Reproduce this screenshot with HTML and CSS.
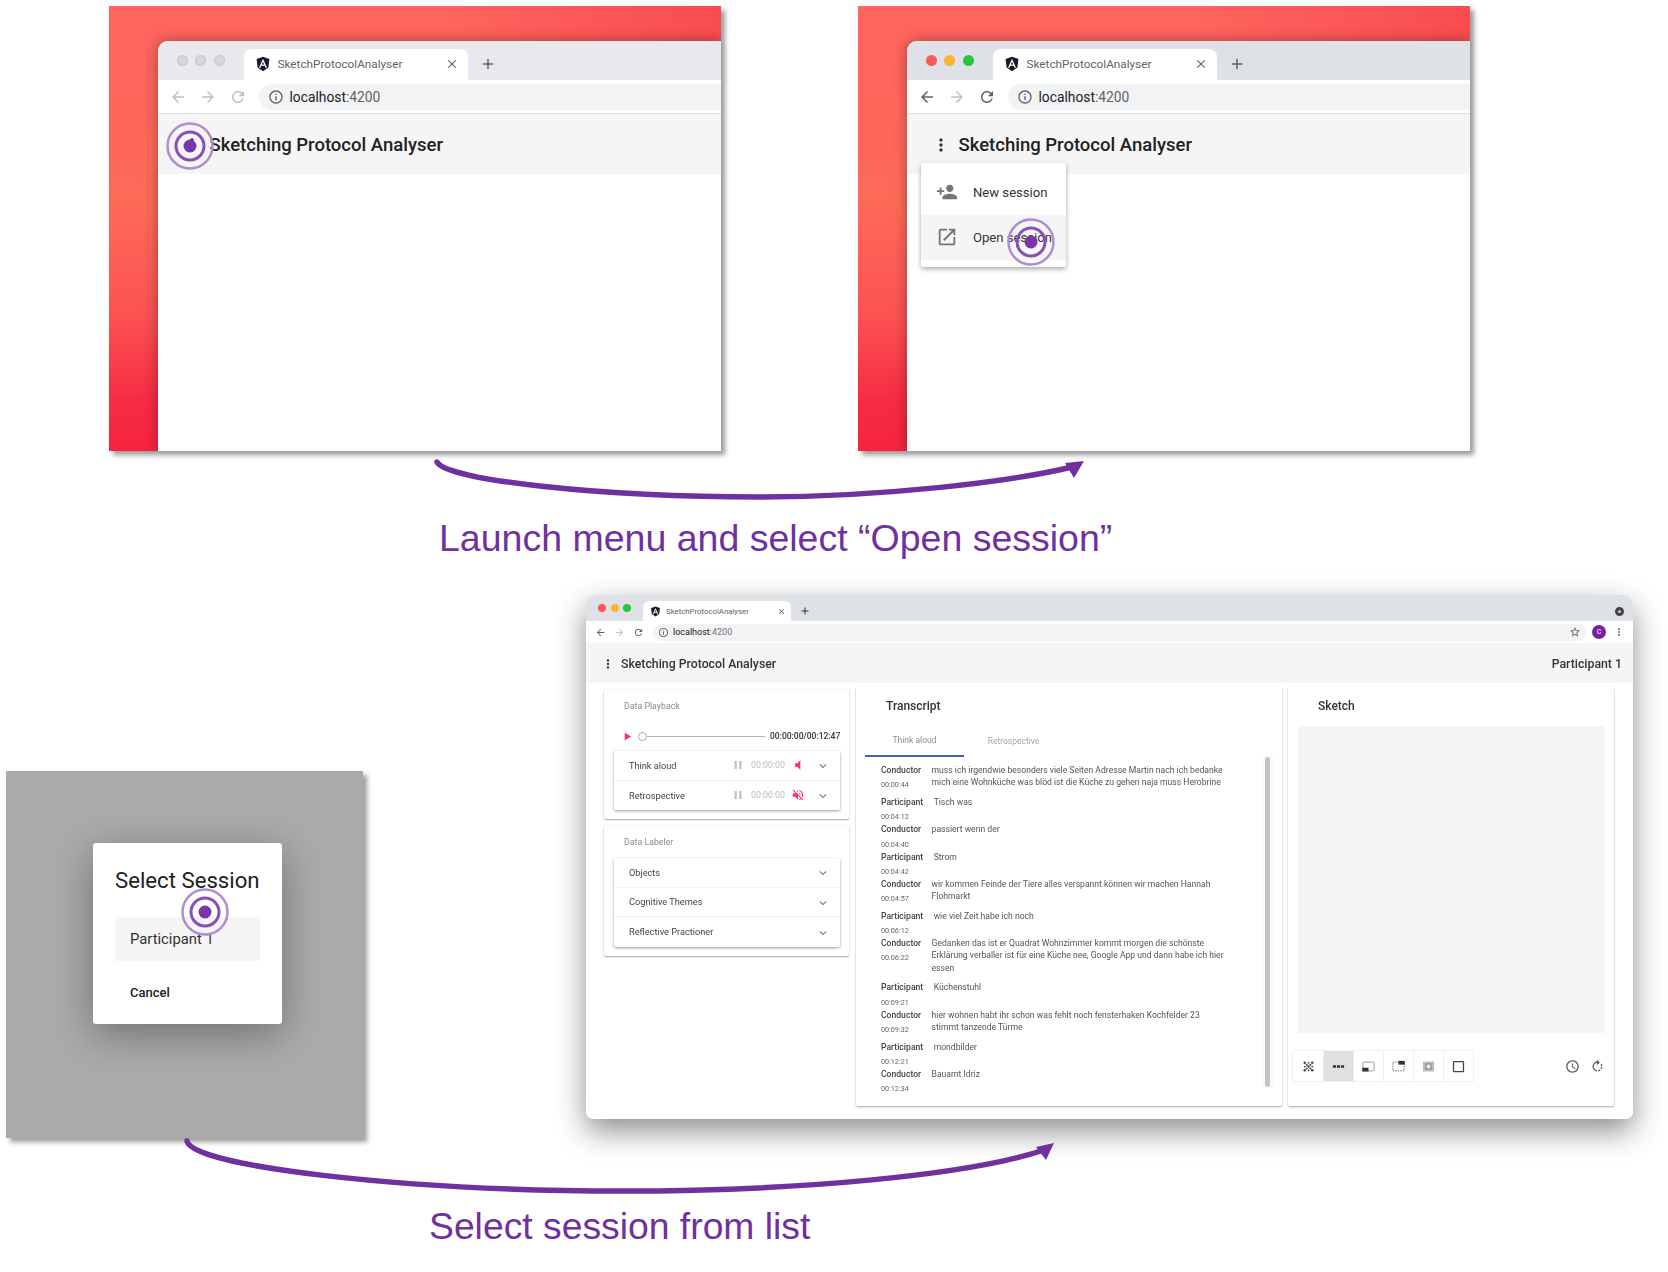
FILE: index.html
```html
<!DOCTYPE html>
<html lang="en">

<head>
    <meta charset="UTF-8">
    <meta name="viewport" content="width=device-width, initial-scale=1.0">
    <title>Sketching Protocol Analyser - open session</title>
    <link rel="stylesheet" href="styles.css">
</head>

<body>
    <!-- icon set -->
    <svg class="defs" width="0" height="0">
        <symbol id="i-back" viewBox="0 0 24 24"><path d="M20 11H7.83l5.59-5.59L12 4l-8 8 8 8 1.41-1.41L7.83 13H20v-2z"/></symbol>
        <symbol id="i-forward" viewBox="0 0 24 24"><path d="M12 4l-1.41 1.41L16.17 11H4v2h12.17l-5.58 5.59L12 20l8-8z"/></symbol>
        <symbol id="i-reload" viewBox="0 0 24 24"><path d="M17.65 6.35C16.2 4.9 14.21 4 12 4c-4.42 0-7.99 3.58-7.99 8s3.57 8 7.99 8c3.73 0 6.84-2.55 7.73-6h-2.08c-.82 2.33-3.04 4-5.65 4-3.31 0-6-2.69-6-6s2.69-6 6-6c1.66 0 3.14.69 4.22 1.78L13 11h7V4l-2.35 2.35z"/></symbol>
        <symbol id="i-info" viewBox="0 0 24 24"><path d="M11 7h2v2h-2zm0 4h2v6h-2zm1-9C6.48 2 2 6.48 2 12s4.48 10 10 10 10-4.48 10-10S17.52 2 12 2zm0 18c-4.41 0-8-3.59-8-8s3.59-8 8-8 8 3.59 8 8-3.59 8-8 8z"/></symbol>
        <symbol id="i-close" viewBox="0 0 24 24"><path d="M19 6.41L17.59 5 12 10.59 6.41 5 5 6.41 10.59 12 5 17.59 6.41 19 12 13.41 17.59 19 19 17.59 13.41 12z"/></symbol>
        <symbol id="i-add" viewBox="0 0 24 24"><path d="M19 13h-6v6h-2v-6H5v-2h6V5h2v6h6v2z"/></symbol>
        <symbol id="i-more" viewBox="0 0 24 24"><path d="M12 8c1.1 0 2-.9 2-2s-.9-2-2-2-2 .9-2 2 .9 2 2 2zm0 2c-1.1 0-2 .9-2 2s.9 2 2 2 2-.9 2-2-.9-2-2-2zm0 6c-1.1 0-2 .9-2 2s.9 2 2 2 2-.9 2-2-.9-2-2-2z"/></symbol>
        <symbol id="i-person-add" viewBox="0 0 24 24"><path d="M15 12c2.21 0 4-1.79 4-4s-1.79-4-4-4-4 1.79-4 4 1.79 4 4 4zm-9-2V7H4v3H1v2h3v3h2v-3h3v-2H6zm9 4c-2.67 0-8 1.34-8 4v2h16v-2c0-2.66-5.33-4-8-4z"/></symbol>
        <symbol id="i-open" viewBox="0 0 24 24"><path d="M19 19H5V5h7V3H5c-1.11 0-2 .9-2 2v14c0 1.1.89 2 2 2h14c1.1 0 2-.9 2-2v-7h-2v7zM14 3v2h3.59l-9.83 9.83 1.41 1.41L19 6.41V10h2V3h-7z"/></symbol>
        <symbol id="i-play" viewBox="0 0 24 24"><path d="M6 4v16l14-8z"/></symbol>
        <symbol id="i-pause" viewBox="0 0 24 24"><path d="M6 19h4V5H6v14zm8-14v14h4V5h-4z"/></symbol>
        <symbol id="i-volume" viewBox="0 0 24 24"><path d="M7 9v6h4l5 5V4l-5 5H7z"/></symbol>
        <symbol id="i-muted" viewBox="0 0 24 24"><path d="M16.5 12c0-1.77-1.02-3.29-2.5-4.03v2.21l2.45 2.45c.03-.2.05-.41.05-.63zm2.5 0c0 .94-.2 1.82-.54 2.64l1.51 1.51C20.63 14.91 21 13.5 21 12c0-4.28-2.99-7.86-7-8.77v2.06c2.89.86 5 3.54 5 6.71zM4.27 3L3 4.27 7.73 9H3v6h4l5 5v-6.73l4.25 4.25c-.67.52-1.42.93-2.25 1.18v2.06c1.38-.31 2.63-.95 3.69-1.81L19.73 21 21 19.73l-9-9L4.27 3zM12 4L9.91 6.09 12 8.18V4z"/></symbol>
        <symbol id="i-chevron" viewBox="0 0 24 24"><path d="M16.59 8.59L12 13.17 7.41 8.59 6 10l6 6 6-6z"/></symbol>
        <symbol id="i-star" viewBox="0 0 24 24"><path d="M22 9.24l-7.19-.62L12 2 9.19 8.63 2 9.24l5.46 4.73L5.82 21 12 17.27 18.18 21l-1.63-7.03L22 9.24zM12 15.4l-3.76 2.27 1-4.28-3.32-2.88 4.38-.38L12 6.1l1.71 4.04 4.38.38-3.32 2.88 1 4.28L12 15.4z"/></symbol>
        <symbol id="i-clock" viewBox="0 0 24 24"><path d="M11.99 2C6.47 2 2 6.48 2 12s4.47 10 9.99 10C17.52 22 22 17.52 22 12S17.52 2 11.99 2zM12 20c-4.42 0-8-3.58-8-8s3.58-8 8-8 8 3.58 8 8-3.58 8-8 8zm.5-13H11v6l5.25 3.15.75-1.23-4.5-2.67z"/></symbol>
        <symbol id="i-rotate" viewBox="0 0 24 24"><path d="M15.55 5.55L11 1v3.07C7.06 4.56 4 7.92 4 12s3.05 7.44 7 7.93v-2.02c-2.84-.48-5-2.94-5-5.91s2.16-5.43 5-5.91V10l4.55-4.45zM19.93 11c-.17-1.39-.72-2.73-1.62-3.89l-1.42 1.42c.54.75.88 1.6 1.02 2.47h2.02zM13 17.9v2.02c1.39-.17 2.74-.71 3.9-1.61l-1.44-1.44c-.75.54-1.59.89-2.46 1.03zm3.89-2.42l1.42 1.41c.9-1.16 1.45-2.5 1.62-3.89h-2.02c-.14.87-.48 1.72-1.02 2.48z"/></symbol>
        <symbol id="i-angular" viewBox="0 0 24 24">
            <path fill="#171c2b" d="M12 1L2.4 4.4l1.5 13L12 23l8.100-5.600 1.500-13z"/>
            <path fill="#fff" fill-rule="evenodd" d="M12 4.200L6 17.800h2.200l1.200-3h5.200l1.200 3H18zM10.300 12.800L12 8.600l1.700 4.200z"/>
        </symbol>
        <symbol id="i-rings" viewBox="0 0 48 48">
            <circle cx="24" cy="24" r="22.500" fill="none" stroke="#b08dd0" stroke-width="2.500"/>
            <circle cx="24" cy="24" r="14" fill="none" stroke="#8b50b6" stroke-width="3"/>
            <circle cx="24" cy="24" r="6.500" fill="#7a35a9"/>
        </symbol>
    </svg>

    <main class="canvas">

        <!-- step 1 -->
        <section class="desktop desktop--one">
            <div class="browser browser--idle">
                <div class="tabstrip">
                    <div class="lights"><i></i><i></i><i></i></div>
                    <div class="tab">
                        <svg class="fav"><use href="#i-angular"/></svg>
                        <span class="tab-title">SketchProtocolAnalyser</span>
                        <svg class="tab-close"><use href="#i-close"/></svg>
                    </div>
                    <svg class="tab-add"><use href="#i-add"/></svg>
                </div>
                <div class="toolbar">
                    <svg class="nav nav--off"><use href="#i-back"/></svg>
                    <svg class="nav nav--off"><use href="#i-forward"/></svg>
                    <svg class="nav nav--off"><use href="#i-reload"/></svg>
                    <div class="omnibox">
                        <svg class="omni-info"><use href="#i-info"/></svg>
                        <span>localhost<em>:4200</em></span>
                    </div>
                </div>
                <header class="appbar">
                    <svg class="appbar-more"><use href="#i-more"/></svg>
                    <span class="appbar-title">Sketching Protocol Analyser</span>
                </header>
            </div>
            <svg class="rings rings--title"><use href="#i-rings"/></svg>
        </section>

        <!-- step 2 -->
        <section class="desktop desktop--two">
            <div class="browser">
                <div class="tabstrip">
                    <div class="lights"><i class="red"></i><i class="amber"></i><i class="green"></i></div>
                    <div class="tab">
                        <svg class="fav"><use href="#i-angular"/></svg>
                        <span class="tab-title">SketchProtocolAnalyser</span>
                        <svg class="tab-close"><use href="#i-close"/></svg>
                    </div>
                    <svg class="tab-add"><use href="#i-add"/></svg>
                </div>
                <div class="toolbar">
                    <svg class="nav"><use href="#i-back"/></svg>
                    <svg class="nav nav--off"><use href="#i-forward"/></svg>
                    <svg class="nav"><use href="#i-reload"/></svg>
                    <div class="omnibox">
                        <svg class="omni-info"><use href="#i-info"/></svg>
                        <span>localhost<em>:4200</em></span>
                    </div>
                </div>
                <header class="appbar">
                    <svg class="appbar-more"><use href="#i-more"/></svg>
                    <span class="appbar-title">Sketching Protocol Analyser</span>
                </header>
            </div>
            <div class="menu">
                <div class="menu-item">
                    <svg><use href="#i-person-add"/></svg>
                    <span>New session</span>
                </div>
                <div class="menu-item menu-item--hover">
                    <svg><use href="#i-open"/></svg>
                    <span>Open session</span>
                </div>
            </div>
            <svg class="rings rings--menu"><use href="#i-rings"/></svg>
        </section>

        <svg class="arrows" viewBox="0 0 1668 1272">
            <path class="arrow-line" d="M437 462C446 480 600 497 760 497C880 497 1010 482 1072 467"/>
            <polygon class="arrow-head" points="1084,461 1065,463 1074,478"/>
            <path class="arrow-line" d="M187 1141C192 1166 400 1191 622 1191C800 1191 970 1175 1044 1150"/>
            <polygon class="arrow-head" points="1054,1143 1036,1147 1046,1160"/>
        </svg>

        <p class="caption caption--one">Launch menu and select “Open session”</p>

        <!-- step 3 -->
        <section class="overlay">
            <div class="dialog">
                <h2>Select Session</h2>
                <div class="dialog-item">Participant 1</div>
                <div class="dialog-cancel">Cancel</div>
            </div>
            <svg class="rings rings--dialog"><use href="#i-rings"/></svg>
        </section>

        <!-- result -->
        <section class="window">
            <div class="window-inner">
                <div class="w-tabstrip">
                    <div class="w-lights"><i class="red"></i><i class="amber"></i><i class="green"></i></div>
                    <div class="w-tab">
                        <svg class="w-fav"><use href="#i-angular"/></svg>
                        <span class="w-tab-title">SketchProtocolAnalyser</span>
                        <svg class="w-close"><use href="#i-close"/></svg>
                    </div>
                    <svg class="w-add"><use href="#i-add"/></svg>
                    <span class="w-record"></span>
                </div>
                <div class="w-toolbar">
                    <svg class="w-nav"><use href="#i-back"/></svg>
                    <svg class="w-nav w-nav--off"><use href="#i-forward"/></svg>
                    <svg class="w-nav"><use href="#i-reload"/></svg>
                    <div class="w-omnibox">
                        <svg class="w-info"><use href="#i-info"/></svg>
                        <span>localhost<em>:4200</em></span>
                        <svg class="w-star"><use href="#i-star"/></svg>
                    </div>
                    <span class="w-avatar">C</span>
                    <svg class="w-kebab"><use href="#i-more"/></svg>
                </div>
                <header class="w-appbar">
                    <svg class="w-more"><use href="#i-more"/></svg>
                    <span class="w-title">Sketching Protocol Analyser</span>
                    <span class="w-user">Participant 1</span>
                </header>

                <div class="w-body">
                    <div class="col-left">
                        <div class="card card--playback">
                            <div class="card-label">Data Playback</div>
                            <div class="player">
                                <svg class="player-play"><use href="#i-play"/></svg>
                                <span class="player-thumb"></span>
                                <span class="player-track"></span>
                                <span class="player-time">00:00:00/00:12:47</span>
                            </div>
                            <div class="panel">
                                <div class="panel-row">
                                    <span class="panel-name">Think aloud</span>
                                    <svg class="ctl-pause"><use href="#i-pause"/></svg>
                                    <span class="ctl-time">00:00:00</span>
                                    <svg class="ctl-vol"><use href="#i-volume"/></svg>
                                    <svg class="ctl-chev"><use href="#i-chevron"/></svg>
                                </div>
                                <div class="panel-row">
                                    <span class="panel-name">Retrospective</span>
                                    <svg class="ctl-pause"><use href="#i-pause"/></svg>
                                    <span class="ctl-time">00:00:00</span>
                                    <svg class="ctl-vol"><use href="#i-muted"/></svg>
                                    <svg class="ctl-chev"><use href="#i-chevron"/></svg>
                                </div>
                            </div>
                        </div>
                        <div class="card card--labeler">
                            <div class="card-label">Data Labeler</div>
                            <div class="panel">
                                <div class="panel-row">
                                    <span class="panel-name">Objects</span>
                                    <svg class="ctl-chev"><use href="#i-chevron"/></svg>
                                </div>
                                <div class="panel-row">
                                    <span class="panel-name">Cognitive Themes</span>
                                    <svg class="ctl-chev"><use href="#i-chevron"/></svg>
                                </div>
                                <div class="panel-row">
                                    <span class="panel-name">Reflective Practioner</span>
                                    <svg class="ctl-chev"><use href="#i-chevron"/></svg>
                                </div>
                            </div>
                        </div>
                    </div>

                    <div class="card transcript">
                        <div class="card-title">Transcript</div>
                        <div class="tabs">
                            <span class="tabs-item tabs-item--on">Think aloud</span>
                            <span class="tabs-item">Retrospective</span>
                        </div>
                        <div class="script">
                            <div class="script-list">
                                <div class="line">
                                    <div class="who"><b>Conductor</b><small>00:00:44</small></div>
                                    <p>muss ich irgendwie besonders viele Seiten Adresse Martin nach ich bedanke<br>mich eine Wohnküche was blöd ist die Küche zu gehen naja muss Herobrine</p>
                                </div>
                                <div class="line">
                                    <div class="who"><b>Participant</b><small>00:04:12</small></div>
                                    <p>Tisch was</p>
                                </div>
                                <div class="line">
                                    <div class="who"><b>Conductor</b><small>00:04:40</small></div>
                                    <p>passiert wenn der</p>
                                </div>
                                <div class="line">
                                    <div class="who"><b>Participant</b><small>00:04:42</small></div>
                                    <p>Strom</p>
                                </div>
                                <div class="line">
                                    <div class="who"><b>Conductor</b><small>00:04:57</small></div>
                                    <p>wir kommen Feinde der Tiere alles verspannt können wir machen Hannah<br>Flohmarkt</p>
                                </div>
                                <div class="line">
                                    <div class="who"><b>Participant</b><small>00:06:12</small></div>
                                    <p>wie viel Zeit habe ich noch</p>
                                </div>
                                <div class="line">
                                    <div class="who"><b>Conductor</b><small>00:06:22</small></div>
                                    <p>Gedanken das ist er Quadrat Wohnzimmer kommt morgen die schönste<br>Erklärung verballer ist für eine Küche nee, Google App und dann habe ich hier<br>essen</p>
                                </div>
                                <div class="line">
                                    <div class="who"><b>Participant</b><small>00:09:21</small></div>
                                    <p>Küchenstuhl</p>
                                </div>
                                <div class="line">
                                    <div class="who"><b>Conductor</b><small>00:09:32</small></div>
                                    <p>hier wohnen habt ihr schon was fehlt noch fensterhaken Kochfelder 23<br>stimmt tanzende Türme</p>
                                </div>
                                <div class="line">
                                    <div class="who"><b>Participant</b><small>00:12:21</small></div>
                                    <p>mondbilder</p>
                                </div>
                                <div class="line">
                                    <div class="who"><b>Conductor</b><small>00:12:34</small></div>
                                    <p>Bauamt Idriz</p>
                                </div>
                            </div>
                            <div class="script-scroll"><span></span></div>
                        </div>
                    </div>

                    <div class="card sketch">
                        <div class="card-title card-title--sketch">Sketch</div>
                        <div class="sketch-canvas"></div>
                        <div class="sketch-tools">
                            <div class="tool-group">
                                <span class="tool">
                                    <svg viewBox="0 0 24 24"><g fill="#444"><circle cx="6" cy="6" r="2"/><circle cx="12" cy="6" r="1.400"/><circle cx="18" cy="6" r="2"/><circle cx="9" cy="9" r="1.600"/><circle cx="15" cy="9" r="1.600"/><circle cx="6" cy="12" r="1.400"/><circle cx="12" cy="12" r="2"/><circle cx="18" cy="12" r="1.400"/><circle cx="9" cy="15" r="1.600"/><circle cx="15" cy="15" r="1.600"/><circle cx="6" cy="18" r="2"/><circle cx="12" cy="18" r="1.400"/><circle cx="18" cy="18" r="2"/></g></svg>
                                </span>
                                <span class="tool tool--on">
                                    <svg viewBox="0 0 24 24"><g fill="#333"><rect x="3" y="10" width="5" height="4"/><rect x="9.500" y="10" width="5" height="4"/><rect x="16" y="10" width="5" height="4"/></g></svg>
                                </span>
                                <span class="tool">
                                    <svg viewBox="0 0 24 24"><rect x="3" y="5" width="18" height="14" rx="1" fill="none" stroke="#999" stroke-width="1.500"/><rect x="2" y="14" width="10" height="6" fill="#333"/></svg>
                                </span>
                                <span class="tool">
                                    <svg viewBox="0 0 24 24"><rect x="3" y="5" width="18" height="14" fill="none" stroke="#555" stroke-width="1.500" stroke-dasharray="2 2"/><rect x="12" y="3" width="10" height="6" fill="#333"/></svg>
                                </span>
                                <span class="tool">
                                    <svg viewBox="0 0 24 24"><rect x="3" y="4" width="18" height="16" fill="#bdbdbd"/><rect x="8" y="8" width="8" height="8" fill="#eee" stroke="#777" stroke-width="1.500"/></svg>
                                </span>
                                <span class="tool">
                                    <svg viewBox="0 0 24 24"><rect x="4" y="4" width="16" height="16" rx="1" fill="none" stroke="#444" stroke-width="2"/></svg>
                                </span>
                            </div>
                            <svg class="sketch-clock"><use href="#i-clock"/></svg>
                            <svg class="sketch-rotate"><use href="#i-rotate"/></svg>
                        </div>
                    </div>
                </div>
            </div>
        </section>

        <p class="caption caption--two">Select session from list</p>
    </main>
</body>

</html>
```
FILE: styles.css
```css
* {
    box-sizing: border-box;
}

body {
    margin: 0;
    background: #fff;
    font-family: Roboto, "Liberation Sans", sans-serif;
    color: #212121;
}

.defs {
    position: absolute;
}

svg {
    display: block;
    fill: currentColor;
}

.canvas {
    position: relative;
    width: 1668px;
    height: 1272px;
    overflow: hidden;
}

/* red desktops with a browser cut off on the right */
.desktop {
    position: absolute;
    top: 6px;
    width: 612px;
    height: 445px;
    padding: 35px 0 0 48.500px;
    overflow: hidden;
    background:
        linear-gradient(90deg, rgba(245, 60, 70, 0) 55%, rgba(245, 60, 70, .6) 100%),
        linear-gradient(180deg, #ff645f 0%, #ff6a58 45%, #fb5252 70%, #f72c44 88%, #f5243f 100%);
    box-shadow: 4px 4px 5px rgba(0, 0, 0, .4);
}

.desktop--one {
    left: 109px;
}

.desktop--two {
    left: 858px;
}

.browser {
    width: 564px;
    height: 410px;
    background: #fff;
    border-radius: 10px 0 0 0;
    box-shadow: 0 0 14px rgba(0, 0, 0, .35);
    overflow: hidden;
}

.tabstrip {
    display: flex;
    height: 39px;
    padding-top: 8px;
    background: #dee1e6;
}

.browser--idle .tabstrip {
    background: #e7e9ec;
}

.lights {
    display: flex;
    gap: 7.5px;
    width: 86px;
    padding: 6px 0 0 19px;
}

.lights i {
    width: 11px;
    height: 11px;
    border-radius: 50%;
    background: #d5d6d7;
    box-shadow: inset 0 0 0 1px #c8c9ca;
}

.lights .red,
.w-lights .red {
    background: #fb5a55;
    box-shadow: none;
}

.lights .amber,
.w-lights .amber {
    background: #fcb32d;
    box-shadow: none;
}

.lights .green,
.w-lights .green {
    background: #2bc541;
    box-shadow: none;
}

.tab {
    display: flex;
    align-items: center;
    width: 224px;
    height: 31px;
    padding: 0 9px 2px 11px;
    background: #fff;
    border-radius: 8px 8px 0 0;
}

.fav {
    width: 16px;
    height: 16px;
}

.tab-title {
    flex: 1;
    margin-left: 7px;
    font-size: 11.750px;
    color: #5f6368;
}

.tab-close {
    width: 14px;
    height: 14px;
    color: #5f6368;
}

.tab-add {
    width: 18px;
    height: 18px;
    margin: 6px 0 0 11px;
    color: #5f6368;
}

.toolbar {
    display: flex;
    align-items: center;
    gap: 12px;
    height: 34px;
    padding-left: 11px;
    background: #fff;
    border-bottom: 1px solid #dadce0;
}

.nav {
    width: 18px;
    height: 18px;
    color: #5f6368;
}

.nav--off {
    color: #bdc1c6;
}

.omnibox {
    display: flex;
    align-items: center;
    flex: 1;
    gap: 6px;
    height: 26px;
    padding-left: 9px;
    background: #f1f3f4;
    border-radius: 13px 0 0 13px;
    font-size: 13.800px;
    color: #202124;
}

.omnibox em {
    font-style: normal;
    color: #5f6368;
}

.omni-info {
    width: 16px;
    height: 16px;
    color: #5f6368;
}

.appbar {
    display: flex;
    align-items: center;
    gap: 8px;
    height: 60px;
    padding: 1px 0 0 24px;
    background: #f5f5f5;
}

.appbar-more {
    width: 20px;
    height: 20px;
    color: #333;
}

.appbar-title {
    font-size: 18.500px;
    font-weight: 500;
}

.rings {
    position: absolute;
    width: 48px;
    height: 48px;
}

.rings--title {
    left: 57px;
    top: 116px;
}

.rings--menu {
    left: 149px;
    top: 212px;
}

.rings--dialog {
    left: 175px;
    top: 117px;
}

.menu {
    position: absolute;
    left: 63px;
    top: 157px;
    width: 145px;
    height: 104px;
    padding-top: 7px;
    background: #fff;
    border-radius: 2px;
    box-shadow: 0 2px 5px rgba(0, 0, 0, .35);
}

.menu-item {
    display: flex;
    align-items: center;
    gap: 15px;
    height: 45px;
    padding: 0 0 1px 15px;
    font-size: 13.100px;
    color: #333;
}

.menu-item svg {
    width: 22px;
    height: 22px;
    color: #757575;
}

.menu-item--hover {
    background: #f5f5f5;
}

/* hand drawn looking arrows */
.arrows {
    position: absolute;
    left: 0;
    top: 0;
    width: 1668px;
    height: 1272px;
    z-index: 3;
    pointer-events: none;
}

.arrow-line {
    fill: none;
    stroke: #7030a0;
    stroke-width: 5.500;
    stroke-linecap: round;
}

.arrow-head {
    fill: #7030a0;
}

.caption {
    position: absolute;
    margin: 0;
    font-family: "Liberation Sans", Arial, sans-serif;
    font-size: 37.500px;
    line-height: 44px;
    color: #7030a0;
    white-space: nowrap;
}

.caption--one {
    left: 439px;
    top: 516px;
}

.caption--two {
    left: 429px;
    top: 1204px;
    font-size: 37.300px;
}

/* grey overlay with the dialog */
.overlay {
    position: absolute;
    left: 6px;
    top: 771px;
    width: 357px;
    height: 367px;
    padding: 72px 0 0 87px;
    background: #ababab;
    box-shadow: 4px 4px 5px rgba(0, 0, 0, .4);
}

.dialog {
    width: 189px;
    height: 181px;
    padding: 22px 22px 0;
    background: #fff;
    border-radius: 3px;
    box-shadow: 0 10px 40px rgba(0, 0, 0, .35);
}

.dialog h2 {
    margin: 0;
    font-size: 22.200px;
    line-height: 30px;
    font-weight: 400;
    white-space: nowrap;
}

.dialog-item {
    display: flex;
    align-items: center;
    width: 145px;
    height: 44px;
    margin-top: 22px;
    padding-left: 15px;
    background: #f5f5f5;
    font-size: 14.800px;
    color: #333;
}

.dialog-cancel {
    margin: 24px 0 0 15px;
    font-size: 13px;
    line-height: 16px;
    font-weight: 500;
}

/* big result window */
.window {
    position: absolute;
    left: 586px;
    top: 595px;
    width: 1047px;
    height: 524px;
    background: #fff;
    border-radius: 10px 10px 7px 7px;
    box-shadow: 0 12px 30px rgba(0, 0, 0, .45);
    overflow: hidden;
}

.window-inner {
    filter: blur(.55px);
}

.w-tabstrip {
    display: flex;
    align-items: flex-end;
    height: 26px;
    padding-left: 12px;
    background: #dee1e6;
}

.w-lights {
    display: flex;
    align-self: flex-start;
    gap: 4.500px;
    width: 45px;
    padding-top: 9px;
}

.w-lights i {
    width: 8px;
    height: 8px;
    border-radius: 50%;
}

.w-tab {
    display: flex;
    align-items: center;
    width: 148px;
    height: 20px;
    padding: 0 5px 0 7px;
    background: #fff;
    border-radius: 6px 6px 0 0;
}

.w-fav {
    width: 11px;
    height: 11px;
}

.w-tab-title {
    flex: 1;
    margin-left: 5px;
    font-size: 7.800px;
    color: #5f6368;
}

.w-close {
    width: 9px;
    height: 9px;
    color: #5f6368;
}

.w-add {
    width: 12px;
    height: 12px;
    margin: 0 0 4px 8px;
    color: #333;
}

.w-record {
    align-self: flex-start;
    width: 9px;
    height: 9px;
    margin: 12px 9px 0 auto;
    border: 3px solid #444;
    border-radius: 50%;
    background: #ccc;
}

.w-toolbar {
    display: flex;
    align-items: center;
    gap: 8px;
    height: 22px;
    padding-left: 9px;
    background: #fff;
}

.w-nav {
    width: 11px;
    height: 11px;
    color: #5f6368;
}

.w-nav--off {
    color: #bdc1c6;
}

.w-omnibox {
    display: flex;
    align-items: center;
    gap: 4px;
    width: 933px;
    height: 17px;
    margin-left: 1px;
    padding: 0 5px;
    background: #f1f3f4;
    border-radius: 9px;
    font-size: 9px;
    color: #202124;
}

.w-omnibox em {
    font-style: normal;
    color: #777;
}

.w-info {
    width: 11px;
    height: 11px;
    color: #5f6368;
}

.w-star {
    width: 12px;
    height: 12px;
    margin-left: auto;
    color: #5f6368;
}

.w-avatar {
    display: flex;
    align-items: center;
    justify-content: center;
    width: 14px;
    height: 14px;
    margin-left: -2px;
    border-radius: 50%;
    background: #7b1fa2;
    color: #fff;
    font-size: 7px;
}

.w-kebab {
    width: 12px;
    height: 12px;
    margin-left: -1px;
    color: #777;
}

.w-appbar {
    display: flex;
    align-items: center;
    height: 40px;
    padding: 1px 11px 0 15px;
    background: #f5f5f5;
    font-size: 12.300px;
    font-weight: 500;
    color: #333;
}

.w-more {
    width: 14px;
    height: 14px;
    margin-right: 6px;
    color: #333;
}

.w-user {
    margin-left: auto;
}

.w-body {
    display: flex;
    gap: 7px;
    height: 436px;
    padding: 4px 18px 13px 18px;
    align-items: flex-start;
}

.col-left {
    display: flex;
    flex-direction: column;
    gap: 6px;
    width: 245px;
    padding-top: 2px;
}

.card {
    background: #fff;
    border-radius: 2px;
    box-shadow: 0 1px 2px rgba(0, 0, 0, .35), 0 0 2px rgba(0, 0, 0, .06);
}

.card--playback {
    height: 130px;
    padding-top: 11px;
}

.card--labeler {
    height: 131px;
    padding-top: 11px;
}

.card-label {
    padding-left: 20px;
    font-size: 8.800px;
    line-height: 12px;
    color: #8a8a8a;
}

.player {
    display: flex;
    align-items: center;
    height: 12px;
    margin-top: 18px;
    padding-left: 18px;
}

.player-play {
    width: 11px;
    height: 11px;
    color: #ff2d78;
}

.player-thumb {
    width: 9px;
    height: 9px;
    margin-left: 5px;
    border: 1px solid #aaa;
    border-radius: 50%;
}

.player-track {
    width: 118px;
    height: 1px;
    background: #b5b5b5;
}

.player-time {
    margin-left: 5px;
    font-size: 8.500px;
    font-weight: 500;
    color: #333;
}

.panel {
    margin: 9px 9px 0 10px;
    background: #fff;
    border-radius: 2px;
    box-shadow: 0 1px 3px rgba(0, 0, 0, .4);
}

.card--labeler .panel {
    margin-top: 10px;
}

.panel-row {
    display: flex;
    align-items: center;
    height: 29.600px;
    padding: 0 10px 0 15px;
    border-bottom: 1px solid #f2f2f2;
    font-size: 9.200px;
    color: #444;
}

.panel-row:last-child {
    border-bottom: 0;
}

.panel-name {
    margin-right: auto;
}

.ctl-pause {
    width: 14px;
    height: 14px;
    color: #c4c4c4;
}

.ctl-time {
    width: 35px;
    margin-left: 6px;
    font-size: 8.800px;
    color: #bbb;
}

.ctl-vol {
    width: 14px;
    height: 14px;
    margin-left: 5px;
    color: #ff2d78;
}

.ctl-chev {
    width: 14px;
    height: 14px;
    margin: 2px 0 0 11px;
    color: #777;
}

.transcript {
    width: 426px;
    height: 419px;
    margin-top: 0;
}

.card-title {
    padding: 13px 0 0 30px;
    font-size: 12px;
    line-height: 12px;
    font-weight: 500;
    color: #333;
}

.tabs {
    display: flex;
    height: 31px;
    margin: 14px 0 0 9px;
}

.tabs-item {
    display: flex;
    align-items: center;
    justify-content: center;
    width: 99px;
    padding-bottom: 2px;
    font-size: 8.500px;
    color: #a5a5a5;
}

.tabs-item--on {
    border-bottom: 2px solid #4a5bb5;
    color: #8f8f8f;
}

.script {
    display: flex;
    height: 331px;
    margin-left: 25px;
    padding-top: 0;
}

.script-list {
    flex: 1;
    padding-top: 7px;
}

.line {
    display: flex;
    gap: 10.500px;
    min-height: 27.300px;
    font-size: 8.600px;
    line-height: 12.200px;
}

.line p {
    margin: 0;
    padding-bottom: 7.600px;
    color: #555;
}

.who b {
    display: block;
    font-weight: 500;
    color: #444;
}

.who small {
    display: block;
    margin-top: 3px;
    font-size: 7.200px;
    line-height: 12px;
    color: #666;
}

.script-scroll {
    width: 10px;
    margin-right: 9px;
    padding: 0 2px;
    background: #f9f9f9;
}

.script-scroll span {
    display: block;
    width: 5px;
    height: 330px;
    background: #c4c4c4;
    border-radius: 3px;
}

.sketch {
    width: 326px;
    height: 419px;
    margin-left: -1px;
}

.card-title--sketch {
    font-size: 12px;
}

.sketch-canvas {
    height: 307px;
    margin: 14px 9px 0 10px;
    background: #f5f5f5;
}

.sketch-tools {
    display: flex;
    align-items: center;
    margin: 17px 0 0 4px;
}

.tool-group {
    display: flex;
    border: 1px solid #f0f0f0;
    border-radius: 2px;
}

.tool {
    display: flex;
    align-items: center;
    justify-content: center;
    width: 30px;
    height: 30px;
    border-left: 1px solid #f0f0f0;
}

.tool:first-child {
    border-left: 0;
}

.tool--on {
    background: #e0e0e0;
}

.tool svg {
    width: 15px;
    height: 15px;
}

.sketch-clock {
    width: 15px;
    height: 15px;
    margin-left: 91px;
    color: #555;
}

.sketch-rotate {
    width: 15px;
    height: 15px;
    margin-left: 10px;
    color: #555;
}
```
